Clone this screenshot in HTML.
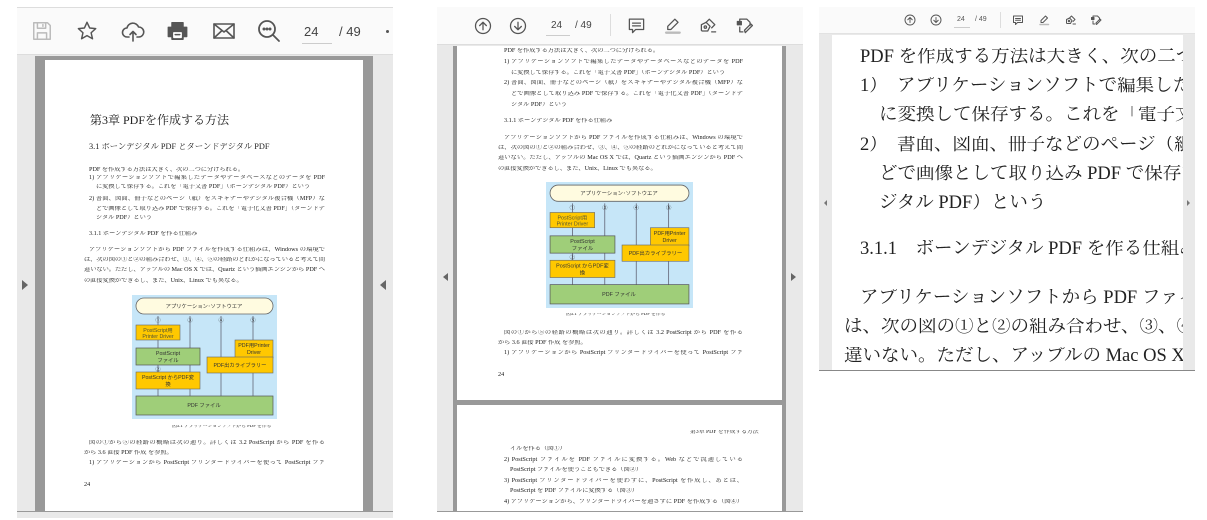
<!DOCTYPE html>
<html><head><meta charset="utf-8">
<style>
*{margin:0;padding:0;box-sizing:border-box}
body{width:1207px;height:520px;background:#fff;position:relative;overflow:hidden;font-family:"Liberation Serif","Noto Serif CJK JP",serif;color:#333}
.a{position:absolute}
.t{position:absolute;white-space:nowrap;overflow:hidden;text-align-last:justify;line-height:1}
.ic{position:absolute;fill:none;stroke:#555;stroke-width:1.6;stroke-linecap:round;stroke-linejoin:round}
.tri{position:absolute;width:0;height:0}
.sm{font-size:6.2px;color:#1a1a1a}
</style></head><body>
<svg width="0" height="0" style="position:absolute">
<defs>
<symbol id="up" viewBox="0 0 24 24"><circle cx="12" cy="12" r="10"/><path d="M12 17V7M7.5 11.5L12 7l4.5 4.5"/></symbol>
<symbol id="dn" viewBox="0 0 24 24"><circle cx="12" cy="12" r="10"/><path d="M12 7v10M7.5 12.5L12 17l4.5-4.5"/></symbol>
<symbol id="cm" viewBox="0 0 24 24"><path d="M3 4h18v13H11l-4 4v-4H3z"/><path d="M7 9h10M7 12.5h10"/></symbol>
<symbol id="hl" viewBox="0 0 24 24"><path d="M15 4l4 4-9 9H6v-4z"/><path d="M4 21h17" stroke="#bbb" stroke-width="3"/></symbol>
<symbol id="sg" viewBox="0 0 24 24"><path d="M9 8l5 5-3 6H4l-1-1V11z"/><path d="M9 8l4-4 7 7-4 4"/><circle cx="8" cy="14" r="1.5"/><path d="M16 20h2M19 20h2"/></symbol>
<symbol id="st" viewBox="0 0 24 24"><path d="M6 9V4h9l4 4v4M6 14v6h4"/><path d="M3 7h5v4H3z" fill="#555"/><path d="M13 21l-1-3 8-8 2 2-8 8z"/></symbol>
<symbol id="dg" viewBox="0 0 145 124">
<rect width="145" height="124" fill="#c6e6f8"/>
<g stroke="#556" stroke-width="0.7" fill="none"><path d="M26 21v80M58 21v80M89 21v80M121 21v80"/></g>
<rect x="4" y="3" width="137" height="16" rx="8" fill="#fffbe0" stroke="#666" stroke-width="0.8"/>
<rect x="4" y="30" width="44" height="15" fill="#ffc800" stroke="#666" stroke-width="0.6"/>
<rect x="4" y="53" width="64" height="17" fill="#9fce79" stroke="#555" stroke-width="0.7"/>
<rect x="4" y="77" width="64" height="17" fill="#ffc800" stroke="#666" stroke-width="0.6"/>
<rect x="103" y="45" width="38" height="18" fill="#ffc800" stroke="#666" stroke-width="0.6"/>
<rect x="75" y="62" width="66" height="16" fill="#ffc800" stroke="#666" stroke-width="0.6"/>
<rect x="4" y="101" width="137" height="19" fill="#9fce79" stroke="#555" stroke-width="0.7"/>
<g font-family="Liberation Sans,Noto Sans CJK JP,sans-serif" font-size="5.3" fill="#333" text-anchor="middle">
<text x="72" y="13">アプリケーション･ソフトウエア</text>
<text x="26" y="27">①</text><text x="58" y="27">③</text><text x="89" y="27">④</text><text x="121" y="27">⑤</text>
<text x="26" y="76">②</text>
<text x="26" y="37" fill="#553">PostScript用</text><text x="26" y="43" fill="#553">Printer Driver</text>
<text x="36" y="60">PostScript</text><text x="36" y="67">ファイル</text>
<text x="36" y="84">PostScript からPDF変</text><text x="36" y="91">換</text>
<text x="122" y="52">PDF用Printer</text><text x="122" y="59">Driver</text>
<text x="108" y="72">PDF出カライブラリー</text>
<text x="72" y="112">PDF ファイル</text>
</g>
</symbol>
</defs></svg>

<!-- PANEL 1 -->
<div class="a" style="left:17px;top:7px;width:376px;height:511px;background:#e9e9e9;border-top:1px solid #ddd"></div>
<div class="a" style="left:17px;top:8px;width:376px;height:47px;background:#fafafa;border-bottom:1px solid #ddd"></div>
<svg class="ic" style="left:31px;top:20px;stroke:#bbb" width="22" height="22" viewBox="0 0 24 24"><path d="M3 3h15l3 3v15H3z"/><path d="M7 3v6h9V3M7 21v-7h10v7"/><path d="M13 5v2"/></svg>
<svg class="ic" style="left:76px;top:20px" width="22" height="22" viewBox="0 0 24 24"><path d="M12 2.5l2.9 6.2 6.6.7-5 4.5 1.5 6.6L12 17l-5.9 3.5 1.5-6.6-5-4.5 6.6-.7z"/></svg>
<svg class="ic" style="left:121px;top:19px" width="24" height="24" viewBox="0 0 24 24"><path d="M8 18H6a4.5 4.5 0 010-9 6 6 0 0111.5-1A4.5 4.5 0 0118 18h-2"/><path d="M12 22v-9M9 15.5l3-3 3 3"/></svg>
<svg class="ic" style="left:166px;top:20px" width="23" height="22" viewBox="0 0 24 24"><path d="M6 3h12v5H6z" fill="#555"/><path d="M2 8h20v10h-4v3H6v-3H2z" fill="#555"/><path d="M8 14h8v5H8z" fill="#fff" stroke="#fff"/><path d="M9.5 16h5" stroke="#555"/></svg>
<svg class="ic" style="left:212px;top:21px" width="24" height="20" viewBox="0 0 24 20"><path d="M2 3h20v14H2z"/><path d="M2 3l10 8 10-8M2 17l7.5-7M22 17l-7.5-7"/></svg>
<svg class="ic" style="left:257px;top:19px;stroke-width:1.8" width="24" height="24" viewBox="0 0 24 24"><circle cx="10" cy="10" r="8"/><path d="M16 16l6 6"/><circle cx="7" cy="10" r=".6" fill="#555"/><circle cx="10" cy="10" r=".6" fill="#555"/><circle cx="13" cy="10" r=".6" fill="#555"/></svg>
<div class="a" style="left:304px;top:24px;font:13px 'Liberation Sans',sans-serif;color:#444">24</div>
<div class="a" style="left:302px;top:43px;width:30px;height:1px;background:#ccc"></div>
<div class="a" style="left:339px;top:24px;font:13px 'Liberation Sans',sans-serif;color:#444">/ 49</div>
<div class="a" style="left:386px;top:30px;width:3px;height:3px;border-radius:50%;background:#555"></div>
<div class="a" style="left:35px;top:56px;width:338px;height:455px;background:#999"></div>
<div class="a" style="left:45px;top:60px;width:318px;height:451px;background:#fff"></div>
<div class="a" style="left:17px;top:511px;width:376px;height:7px;background:#e9e9e9;border-top:1px solid #999"></div>
<div class="tri" style="left:22px;top:280px;border-left:6px solid #666;border-top:5px solid transparent;border-bottom:5px solid transparent"></div>
<div class="tri" style="left:380px;top:280px;border-right:6px solid #666;border-top:5px solid transparent;border-bottom:5px solid transparent"></div>
<div class="sm">
<div class="t" style="left:90px;top:114px;font-size:12px;color:#222;text-align-last:auto">第3章 PDFを作成する方法</div>
<div class="t" style="left:89px;top:143px;font-size:8.3px;color:#222;text-align-last:auto">3.1 ボーンデジタル PDF とターンドデジタル PDF</div>
<div class="t" style="left:89px;top:167px;text-align-last:auto">PDF を作成する方法は大きく、次の二つに分けられる。</div>
<div class="t" style="left:89px;top:175px;width:236px">1) アプリケーションソフトで編集したデータやデータベースなどのデータを PDF</div>
<div class="t" style="left:96px;top:184px;text-align-last:auto">に変換して保存する。これを「電子文書 PDF」（ボーンデジタル PDF）という</div>
<div class="t" style="left:89px;top:196px;width:236px">2) 書面、図面、冊子などのページ（紙）をスキャナーやデジタル複合機（MFP）な</div>
<div class="t" style="left:96px;top:206px;width:229px">どで画像として取り込み PDF で保存する。これを「電子化文書 PDF」（ターンドデ</div>
<div class="t" style="left:96px;top:215px;text-align-last:auto">ジタル PDF）という</div>
<div class="t" style="left:89px;top:231px;text-align-last:auto">3.1.1 ボーンデジタル PDF を作る仕組み</div>
<div class="t" style="left:89px;top:247px;width:236px">アプリケーションソフトから PDF ファイルを作成する仕組みは、Windows の環境で</div>
<div class="t" style="left:84px;top:257px;width:241px">は、次の図の①と②の組み合わせ、③、④、⑤の経路のどれかになっていると考えて間</div>
<div class="t" style="left:84px;top:267px;width:241px">違いない。ただし、アップルの Mac OS X では、Quartz という描画エンジンから PDF へ</div>
<div class="t" style="left:84px;top:278px;text-align-last:auto">の直接変換ができるし、また、Unix、Linux でも異なる。</div>
<div class="t" style="left:172px;top:425px;font-size:4.8px;text-align-last:auto">図3.1 アプリケーションソフトから PDF を作る</div>
<div class="t" style="left:89px;top:440px;width:236px">図の①から⑤の経路の概略は次の通り。詳しくは 3.2 PostScript から PDF を作る</div>
<div class="t" style="left:84px;top:450px;text-align-last:auto">から 3.6 直接 PDF 作成 を参照。</div>
<div class="t" style="left:89px;top:460px;width:236px">1) アプリケーションから PostScript プリンタードライバーを使って PostScript ファ</div>
<div class="t" style="left:84px;top:482px;text-align-last:auto">24</div>
</div>
<svg class="a" style="left:132px;top:295px" width="145" height="124"><use href="#dg"/></svg>

<!-- PANEL 2 -->
<div class="a" style="left:437px;top:7px;width:366px;height:511px;background:#e9e9e9"></div>
<div class="a" style="left:437px;top:7px;width:366px;height:38px;background:#fafafa;border-bottom:1px solid #ddd"></div>
<svg class="ic" style="left:474px;top:17px;stroke-width:1.7" width="18" height="18"><use href="#up"/></svg>
<svg class="ic" style="left:509px;top:17px;stroke-width:1.7" width="18" height="18"><use href="#dn"/></svg>
<div class="a" style="left:551px;top:20px;font:10px 'Liberation Sans',sans-serif;color:#444">24</div>
<div class="a" style="left:546px;top:35px;width:24px;height:1px;background:#ccc"></div>
<div class="a" style="left:575px;top:20px;font:10px 'Liberation Sans',sans-serif;color:#444">/ 49</div>
<div class="a" style="left:610px;top:14px;width:1px;height:22px;background:#ddd"></div>
<svg class="ic" style="left:627px;top:16px" width="19" height="19"><use href="#cm"/></svg>
<svg class="ic" style="left:663px;top:16px" width="19" height="19"><use href="#hl"/></svg>
<svg class="ic" style="left:699px;top:16px" width="19" height="19"><use href="#sg"/></svg>
<svg class="ic" style="left:735px;top:16px" width="19" height="19"><use href="#st"/></svg>
<div class="a" style="left:453px;top:46px;width:333px;height:465px;background:#999"></div>
<div class="a" style="left:457px;top:46px;width:325px;height:354px;background:#fff"></div>
<div class="a" style="left:457px;top:405px;width:325px;height:106px;background:#fff"></div>
<div class="a" style="left:437px;top:511px;width:366px;height:7px;background:#fff;border-top:1px solid #999"></div>
<div class="tri" style="left:443px;top:273px;border-right:5px solid #666;border-top:4px solid transparent;border-bottom:4px solid transparent"></div>
<div class="tri" style="left:791px;top:273px;border-left:5px solid #666;border-top:4px solid transparent;border-bottom:4px solid transparent"></div>
<div class="sm">
<div class="t" style="left:504px;top:48px;text-align-last:auto">PDF を作成する方法は大きく、次の二つに分けられる。</div>
<div class="t" style="left:504px;top:59px;width:239px">1) アプリケーションソフトで編集したデータやデータベースなどのデータを PDF</div>
<div class="t" style="left:511px;top:70px;text-align-last:auto">に変換して保存する。これを「電子文書 PDF」（ボーンデジタル PDF）という</div>
<div class="t" style="left:504px;top:80px;width:239px">2) 書面、図面、冊子などのページ（紙）をスキャナーやデジタル複合機（MFP）な</div>
<div class="t" style="left:511px;top:91px;width:232px">どで画像として取り込み PDF で保存する。これを「電子化文書 PDF」（ターンドデ</div>
<div class="t" style="left:511px;top:102px;text-align-last:auto">ジタル PDF）という</div>
<div class="t" style="left:504px;top:118px;text-align-last:auto">3.1.1 ボーンデジタル PDF を作る仕組み</div>
<div class="t" style="left:504px;top:135px;width:239px">アプリケーションソフトから PDF ファイルを作成する仕組みは、Windows の環境で</div>
<div class="t" style="left:498px;top:145px;width:245px">は、次の図の①と②の組み合わせ、③、④、⑤の経路のどれかになっていると考えて間</div>
<div class="t" style="left:498px;top:155px;width:245px">違いない。ただし、アップルの Mac OS X では、Quartz という描画エンジンから PDF へ</div>
<div class="t" style="left:498px;top:166px;text-align-last:auto">の直接変換ができるし、また、Unix、Linux でも異なる。</div>
<div class="t" style="left:566px;top:313px;font-size:4.8px;text-align-last:auto">図3.1 アプリケーションソフトから PDF を作る</div>
<div class="t" style="left:504px;top:330px;width:239px">図の①から⑤の経路の概略は次の通り。詳しくは 3.2 PostScript から PDF を作る</div>
<div class="t" style="left:498px;top:340px;text-align-last:auto">から 3.6 直接 PDF 作成 を参照。</div>
<div class="t" style="left:504px;top:350px;width:239px">1) アプリケーションから PostScript プリンタードライバーを使って PostScript ファ</div>
<div class="t" style="left:498px;top:372px;text-align-last:auto">24</div>
<div class="t" style="left:690px;top:430px;font-size:5.8px;text-align-last:auto">第3章 PDF を作成する方法</div>
<div class="t" style="left:510px;top:446px;text-align-last:auto">イルを作る（図①）</div>
<div class="t" style="left:504px;top:457px;width:239px">2) PostScript ファイルを PDF ファイルに変換する。Web などで流通している</div>
<div class="t" style="left:510px;top:467px;text-align-last:auto">PostScript ファイルを使うこともできる（図②）</div>
<div class="t" style="left:504px;top:478px;width:239px">3) PostScript プリンタードライバーを使わずに、PostScript を作成し、あとは、</div>
<div class="t" style="left:510px;top:488px;text-align-last:auto">PostScript を PDF ファイルに変換する（図③）</div>
<div class="t" style="left:504px;top:499px;width:239px">4) アプリケーションから、プリンタードライバーを通さずに PDF を作成する（図④）</div>
</div>
<svg class="a" style="left:546px;top:182px" width="147" height="126" viewBox="0 0 145 124" preserveAspectRatio="none"><use href="#dg"/></svg>

<!-- PANEL 3 -->
<div class="a" style="left:819px;top:7px;width:376px;height:364px;background:#e9e9e9;border-bottom:1px solid #888"></div>
<div class="a" style="left:819px;top:7px;width:376px;height:27px;background:#fafafa;border-bottom:1px solid #e2e2e2"></div>
<svg class="ic" style="left:904px;top:14px;stroke-width:1.9" width="12" height="12"><use href="#up"/></svg>
<svg class="ic" style="left:930px;top:14px;stroke-width:1.9" width="12" height="12"><use href="#dn"/></svg>
<div class="a" style="left:957px;top:16px;font:7px 'Liberation Sans',sans-serif;color:#555">24</div>
<div class="a" style="left:954px;top:27px;width:16px;height:1px;background:#ccc"></div>
<div class="a" style="left:975px;top:16px;font:7px 'Liberation Sans',sans-serif;color:#555">/ 49</div>
<div class="a" style="left:1000px;top:12px;width:1px;height:16px;background:#ddd"></div>
<svg class="ic" style="left:1012px;top:14px;stroke-width:2" width="12" height="12"><use href="#cm"/></svg>
<svg class="ic" style="left:1038px;top:14px;stroke-width:2" width="12" height="12"><use href="#hl"/></svg>
<svg class="ic" style="left:1065px;top:14px;stroke-width:2" width="12" height="12"><use href="#sg"/></svg>
<svg class="ic" style="left:1090px;top:14px;stroke-width:2" width="12" height="12"><use href="#st"/></svg>
<div class="a" style="left:832px;top:35px;width:351px;height:335px;background:#fff;overflow:hidden;font-size:18.5px;color:#222">
<div class="t" style="left:28px;top:13px">PDF を作成する方法は大きく、次の二つに分けられる。</div>
<div class="t" style="left:28px;top:42px">1）　アプリケーションソフトで編集したデータ</div>
<div class="t" style="left:47px;top:71px">に変換して保存する。これを「電子文書</div>
<div class="t" style="left:28px;top:101px">2）　書面、図面、冊子などのページ（紙）を</div>
<div class="t" style="left:47px;top:130px">どで画像として取り込み PDF で保存する</div>
<div class="t" style="left:47px;top:159px">ジタル PDF）という</div>
<div class="t" style="left:28px;top:205px">3.1.1　ボーンデジタル PDF を作る仕組み</div>
<div class="t" style="left:28px;top:254px">アプリケーションソフトから PDF ファイル</div>
<div class="t" style="left:12px;top:283px">は、次の図の①と②の組み合わせ、③、④、</div>
<div class="t" style="left:12px;top:312px">違いない。ただし、アップルの Mac OS X では</div>
</div>
<div class="tri" style="left:824px;top:200px;border-right:3px solid #777;border-top:3px solid transparent;border-bottom:3px solid transparent"></div>
<div class="tri" style="left:1187px;top:200px;border-left:3px solid #777;border-top:3px solid transparent;border-bottom:3px solid transparent"></div>
</body></html>
